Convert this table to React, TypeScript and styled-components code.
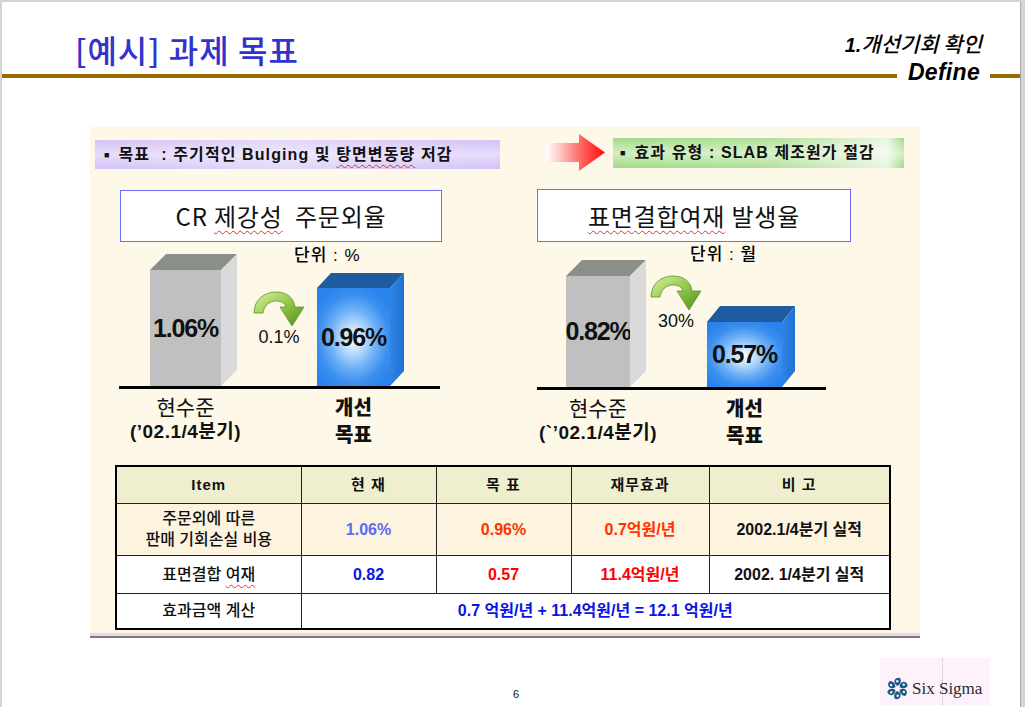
import React from "react";
import styled, { createGlobalStyle } from "styled-components";

const KR = `"Liberation Sans", "Noto Sans CJK KR", sans-serif`;
const KRONLY = `"Noto Sans CJK KR", "Noto Sans", sans-serif`;

const GlobalStyle = createGlobalStyle`
  html, body { margin: 0; padding: 0; }
  body {
    width: 1025px; height: 707px; overflow: hidden;
    background: #d4d4d4; font-family: ${KRONLY}; color: #000;
  }
  #root { width: 1025px; height: 707px; }
`;

const Frame = styled.div`
  width: 1025px;
  height: 707px;
  box-sizing: border-box;
  padding: 2px 4px 0 2px;
  background: #d4d4d4;
`;

const Slide = styled.div`
  height: 705px;
  background: #fff;
  display: flex;
  flex-direction: column;
  border-right: 1px solid #a9a9a9;
  box-sizing: border-box;
`;

/* ---------- header ---------- */
const HeaderTop = styled.header`
  height: 58px;
  display: flex;
  justify-content: space-between;
  align-items: flex-end;
  padding: 0 38px 0 73px;
  box-sizing: border-box;
`;

const Title = styled.h1`
  margin: 0 0 -5px;
  font: 500 32px/1 ${KRONLY};
  letter-spacing: 1px;
  color: #3333cc;
`;

const Section = styled.div`
  margin: 0 0 5px;
  font: italic 500 21px/20px ${KRONLY};
  color: #000;
`;

const SectionNum = styled.span`
  font: italic 700 20px/20px "Liberation Sans", sans-serif;
`;

const RuleRow = styled.div`
  height: 22px;
  display: flex;
  align-items: flex-start;
`;

const Rule = styled.div<{ $w?: number }>`
  height: 4px;
  margin-top: 14px;
  background: #9c6b00;
  ${(p) => (p.$w ? `width:${p.$w}px; flex:none;` : "flex:1;")}
`;

const Define = styled.div`
  margin-top: 2px;
  padding: 0 10px 0 11px;
  font: italic 700 23px/20px "Liberation Sans", Arial, sans-serif;
  letter-spacing: 0.3px;
  color: #000;
`;

/* ---------- panel ---------- */
const Panel = styled.section`
  margin: 45px 0 0 88px;
  width: 830px;
  height: 511px;
  box-sizing: border-box;
  background: #fef8e8;
  border-bottom: 2px solid #7b7b7b;
  box-shadow: inset 0 -3px 0 #f1d6e2;
  display: flex;
  flex-direction: column;
`;

const TopGrid = styled.div`
  display: grid;
  grid-template-columns: 426px 404px;
  height: 338px;
  align-items: start;
`;

const Column = styled.div<{ $pt: number }>`
  display: flex;
  flex-direction: column;
  align-items: flex-start;
  padding-top: ${(p) => p.$pt}px;
`;

const BannerRow = styled.div`
  display: flex;
  align-items: center;
  height: 37px;
`;

type Tone = "violet" | "green";

const Banner = styled.div<{ $tone: Tone; $w: number; $h: number; $ml: number; $pl: number }>`
  width: ${(p) => p.$w}px;
  height: ${(p) => p.$h}px;
  margin-left: ${(p) => p.$ml}px;
  padding-left: ${(p) => p.$pl}px;
  box-sizing: border-box;
  display: flex;
  align-items: center;
  white-space: pre;
  font: 700 16px/1 ${KR};
  letter-spacing: 1.1px;
  color: #111;
  background: ${(p) =>
    p.$tone === "violet"
      ? "linear-gradient(90deg, rgba(255,255,255,0) 0%, rgba(255,255,255,0.35) 45%, rgba(255,255,255,0) 100%), linear-gradient(180deg, #d2c2f5 0%, #e6dcfb 50%, #d2c2f5 100%)"
      : "linear-gradient(90deg, rgba(255,255,255,0) 0%, rgba(255,255,255,0.15) 55%, rgba(255,255,255,0.75) 94%, rgba(255,255,255,0) 100%), linear-gradient(180deg, #a2da86 0%, #d2efc3 50%, #a2da86 100%)"};
`;

const BannerText = styled.span`
  display: inline-block;
`;

const Bullet = styled.span`
  font-size: 9px;
  margin-right: 8px;
  position: relative;
  top: -2px;
`;

const TitleBox = styled.div<{ $w: number; $h: number; $ml: number; $mt: number }>`
  width: ${(p) => p.$w}px;
  height: ${(p) => p.$h}px;
  margin: ${(p) => p.$mt}px 0 0 ${(p) => p.$ml}px;
  box-sizing: border-box;
  border: 1px solid #6f6ff2;
  background: #fff;
  display: flex;
  align-items: center;
  justify-content: center;
  font: 400 24px/1 ${KRONLY};
  letter-spacing: 0.8px;
  color: #111;
  white-space: pre;
`;

const TitleText = styled.span`
  display: inline-block;
`;

const Wavy = styled.span`
  text-decoration: underline wavy #e03030;
  text-decoration-thickness: 1px;
  text-underline-offset: 4px;
`;

/* ---------- chart ---------- */
const Unit = styled.div<{ $pl: number; $mt: number }>`
  padding-left: ${(p) => p.$pl}px;
  margin-top: ${(p) => p.$mt}px;
  font: 500 17px/18px ${KR};
  letter-spacing: 1px;
  white-space: nowrap;
`;

const Plot = styled.div<{ $w: number; $ml: number; $mt: number }>`
  display: flex;
  align-items: flex-end;
  width: ${(p) => p.$w}px;
  margin: ${(p) => p.$mt}px 0 0 ${(p) => p.$ml}px;
  border-bottom: 3px solid #000;
`;

type CubeTone = "gray" | "blue";

const faceColors: Record<CubeTone, { front: string; top: string; side: string }> = {
  gray: { front: "#c0c0c0", top: "#8a9089", side: "#dadada" },
  blue: {
    front:
      "radial-gradient(ellipse 62% 58% at 50% 52%, #ffffff 0%, #c4e0fc 22%, #6db0f6 52%, #3a8ff0 78%, #2a83ec 100%)",
    top: "#1e5b9f",
    side: "linear-gradient(90deg, #2f86e6, #1f6fd2)",
  },
};

const CubeBox = styled.div<{ $w: number; $h: number; $dx: number; $dy: number; $ml: number }>`
  position: relative;
  flex: none;
  box-sizing: border-box;
  width: ${(p) => p.$w + p.$dx}px;
  height: ${(p) => p.$h + p.$dy}px;
  padding-top: ${(p) => p.$dy}px;
  margin-left: ${(p) => p.$ml}px;
`;

const Front = styled.div<{ $tone: CubeTone; $w: number; $h: number }>`
  width: ${(p) => p.$w}px;
  height: ${(p) => p.$h}px;
  background: ${(p) => faceColors[p.$tone].front};
  display: flex;
  align-items: center;
  justify-content: center;
  font: 700 25px/1 "Liberation Sans", Arial, sans-serif;
  letter-spacing: -1.2px;
  color: #111;
  white-space: nowrap;
`;

const TopFace = styled.div<{ $tone: CubeTone; $w: number; $dx: number; $dy: number }>`
  position: absolute;
  left: 0;
  top: 0;
  width: ${(p) => p.$w + p.$dx}px;
  height: ${(p) => p.$dy}px;
  background: ${(p) => faceColors[p.$tone].top};
  clip-path: polygon(${(p) => p.$dx}px 0, 100% 0, ${(p) => p.$w}px 100%, 0 100%);
`;

const SideFace = styled.div<{ $tone: CubeTone; $h: number; $dx: number; $dy: number }>`
  position: absolute;
  right: 0;
  top: 0;
  width: ${(p) => p.$dx}px;
  height: ${(p) => p.$h + p.$dy}px;
  background: ${(p) => faceColors[p.$tone].side};
  clip-path: polygon(0 ${(p) => p.$dy}px, 100% 0, 100% ${(p) => p.$h}px, 0 100%);
`;

const ArrowBlock = styled.div<{ $ml: number; $mb: number }>`
  flex: none;
  width: 52px;
  margin: 0 0 ${(p) => p.$mb}px ${(p) => p.$ml}px;
  display: flex;
  flex-direction: column;
  align-items: center;
`;

const ArrowPct = styled.div`
  margin-top: 2px;
  font: 400 18px/17px "Liberation Sans", Arial, sans-serif;
  color: #111;
`;

const LabelRow = styled.div<{ $ml: number }>`
  display: flex;
  margin: 4px 0 0 ${(p) => p.$ml}px;
`;

const Label = styled.div<{ $w: number; $ml: number }>`
  flex: none;
  width: ${(p) => p.$w}px;
  margin-left: ${(p) => p.$ml}px;
  display: flex;
  flex-direction: column;
  align-items: center;
  white-space: nowrap;
`;

const LabelLine = styled.span<{ $kind: "plain" | "period" | "strong" }>`
  color: #111;
  text-align: center;
  font: ${(p) =>
    p.$kind === "plain"
      ? `400 21px/26px ${KRONLY}`
      : p.$kind === "period"
      ? `700 19px/26px ${KR}`
      : `900 20px/27px ${KRONLY}`};
  letter-spacing: ${(p) => (p.$kind === "period" ? "0.5px" : "0")};
`;

const CurveArrow = () => (
  <svg width="52" height="36" viewBox="0 0 52 36">
    <defs>
      <linearGradient id="ga" x1="0" y1="0" x2="1" y2="1">
        <stop offset="0" stopColor="#d8f0a0" />
        <stop offset="0.5" stopColor="#92c84c" />
        <stop offset="1" stopColor="#4f8d1c" />
      </linearGradient>
    </defs>
    <path
      d="M1 22 C1 9 11 1 23 1 C34 1 41 7 42 16 L51 16 L39 35 L27 16 L33 16 C32 12 28 10 23 10 C16 10 11 15 10 22 Z"
      fill="url(#ga)"
      stroke="#5f922a"
      strokeWidth="0.8"
    />
  </svg>
);

const RedArrowSvg = styled.svg<{ $ml: number }>`
  flex: none;
  margin-left: ${(p) => p.$ml}px;
`;

const RedArrow = ({ ml }: { ml: number }) => (
  <RedArrowSvg $ml={ml} width="59" height="37" viewBox="0 0 59 37">
    <defs>
      <linearGradient id="ra" x1="0" y1="0" x2="1" y2="0">
        <stop offset="0" stopColor="#ffffff" stopOpacity="0.9" />
        <stop offset="0.55" stopColor="#ff7070" />
        <stop offset="1" stopColor="#ff0a0a" />
      </linearGradient>
    </defs>
    <path d="M0 9 L33 9 L33 0 L59 18.5 L33 37 L33 28 L0 28 Z" fill="url(#ra)" />
  </RedArrowSvg>
);

type CubeSpec = { w: number; h: number; dx: number; dy: number; ml: number; value: string };

const Cube = ({ spec, tone }: { spec: CubeSpec; tone: CubeTone }) => (
  <CubeBox $w={spec.w} $h={spec.h} $dx={spec.dx} $dy={spec.dy} $ml={spec.ml}>
    <TopFace $tone={tone} $w={spec.w} $dx={spec.dx} $dy={spec.dy} />
    <SideFace $tone={tone} $h={spec.h} $dx={spec.dx} $dy={spec.dy} />
    <Front $tone={tone} $w={spec.w} $h={spec.h}>
      {spec.value}
    </Front>
  </CubeBox>
);

type ChartSpec = {
  unit: string;
  unitPl: number;
  unitMt: number;
  plotW: number;
  plotMl: number;
  plotMt: number;
  gray: CubeSpec;
  blue: CubeSpec;
  arrow: { ml: number; mb: number; pct: string };
  labels: [{ ml: number; w: number }, { ml: number; w: number }];
  period: string;
};

const Chart = ({ spec }: { spec: ChartSpec }) => (
  <>
    <Unit $pl={spec.plotMl + spec.unitPl} $mt={spec.unitMt}>
      {spec.unit}
    </Unit>
    <Plot $w={spec.plotW} $ml={spec.plotMl} $mt={spec.plotMt}>
      <Cube spec={spec.gray} tone="gray" />
      <ArrowBlock $ml={spec.arrow.ml} $mb={spec.arrow.mb}>
        <CurveArrow />
        <ArrowPct>{spec.arrow.pct}</ArrowPct>
      </ArrowBlock>
      <Cube spec={spec.blue} tone="blue" />
    </Plot>
    <LabelRow $ml={spec.plotMl}>
      <Label $w={spec.labels[0].w} $ml={spec.labels[0].ml}>
        <LabelLine $kind="plain">현수준</LabelLine>
        <LabelLine $kind="period">{spec.period}</LabelLine>
      </Label>
      <Label $w={spec.labels[1].w} $ml={spec.labels[1].ml}>
        <LabelLine $kind="strong">
          개선
          <br />
          목표
        </LabelLine>
      </Label>
    </LabelRow>
  </>
);

const leftChart: ChartSpec = {
  unit: "단위 : %",
  unitPl: 175,
  unitMt: 5,
  plotW: 321,
  plotMl: 29,
  plotMt: -11,
  gray: { w: 71, h: 116, dx: 16, dy: 16, ml: 31, value: "1.06%" },
  blue: { w: 73, h: 98, dx: 14, dy: 15, ml: 12, value: "0.96%" },
  arrow: { ml: 16, mb: 40, pct: "0.1%" },
  labels: [
    { ml: 31, w: 71 },
    { ml: 96, w: 73 },
  ],
  period: "(’02.1/4분기)",
};

const rightChart: ChartSpec = {
  unit: "단위 : 월",
  unitPl: 153,
  unitMt: 4,
  plotW: 289,
  plotMl: 21,
  plotMt: -4,
  gray: { w: 64, h: 111, dx: 16, dy: 16, ml: 29, value: "0.82%" },
  blue: { w: 75, h: 65, dx: 13, dy: 16, ml: 5, value: "0.57%" },
  arrow: { ml: 4, mb: 57, pct: "30%" },
  labels: [
    { ml: 29, w: 64 },
    { ml: 77, w: 75 },
  ],
  period: "(`’02.1/4분기)",
};

/* ---------- table ---------- */
const Table = styled.table`
  margin-left: 25px;
  width: 774px;
  border-collapse: collapse;
  table-layout: fixed;
  border: 2px solid #000;
  font-family: ${KR};
`;

const Col = styled.col<{ $w: number }>`
  width: ${(p) => p.$w}px;
`;

const Row = styled.tr<{ $h: number; $bg: string }>`
  height: ${(p) => p.$h}px;
  background: ${(p) => p.$bg};
`;

const Th = styled.th`
  padding: 0;
  border: 1px solid #222;
  background: #efefcf;
  font: 700 15px/1 ${KR};
  letter-spacing: 1px;
  color: #111;
`;

const Td = styled.td<{ $color?: string; $weight?: number }>`
  padding: 0;
  border: 1px solid #222;
  text-align: center;
  font-size: 16px;
  line-height: 21px;
  font-weight: ${(p) => p.$weight ?? 700};
  color: ${(p) => p.$color ?? "#111"};
  white-space: nowrap;
`;

/* ---------- footer ---------- */
const Footer = styled.footer`
  flex: 1;
  display: grid;
  grid-template-columns: 1fr auto 1fr;
  align-items: end;
`;

const PageNum = styled.div`
  grid-column: 2;
  margin: 0 0 6px 10px;
  font: 400 11px/14px "Liberation Sans", Arial, sans-serif;
  color: #111;
`;

const Logo = styled.div`
  grid-column: 3;
  justify-self: end;
  position: relative;
  width: 110px;
  height: 47px;
  margin: 0 30px 2px 0;
  box-sizing: border-box;
  padding: 0 0 0 6px;
  background: #fdf2fb;
  display: flex;
  align-items: center;
  gap: 3px;
  &::after {
    content: "";
    position: absolute;
    left: 62px;
    top: 0;
    bottom: 0;
    border-left: 1px dotted #c8c0c8;
  }
`;

const LogoText = styled.span`
  margin-top: 14px;
  font: 400 17px/20px "Liberation Serif", "Times New Roman", serif;
  color: #2b2b2b;
  position: relative;
  z-index: 1;
`;

const LogoMarkSvg = styled.svg`
  flex: none;
  margin-top: 14px;
`;

const LogoMark = () => (
  <LogoMarkSvg width="23" height="23" viewBox="-12 -12 24 24">
    {[0, 60, 120, 180, 240, 300].map((a) => (
      <g key={a} transform={`rotate(${a})`}>
        <path
          d="M0 -2.6 C2.6 -4 4.6 -7 2.8 -10.6 C0.8 -11.8 -2.6 -10.8 -3.2 -8 C-3.6 -5.6 -2.2 -3.6 0 -2.6 Z"
          fill="#1c5a86"
        />
        <circle cx="-0.2" cy="-7.6" r="1.3" fill="#fdf2fb" />
      </g>
    ))}
    <circle r="2.2" fill="#fdf2fb" />
  </LogoMarkSvg>
);

export default function App() {
  return (
    <>
      <GlobalStyle />
      <Frame>
        <Slide>
          <HeaderTop>
            <Title>[예시] 과제 목표</Title>
            <Section>
              <SectionNum>1.</SectionNum>개선기회 확인
            </Section>
          </HeaderTop>
          <RuleRow>
            <Rule />
            <Define>Define</Define>
            <Rule $w={30} />
          </RuleRow>

          <Panel>
            <TopGrid>
              <Column $pt={13}>
                <Banner $tone="violet" $w={405} $h={29} $ml={5} $pl={9}>
                  <BannerText>
                    <Bullet>■</Bullet>
                    {"목표  : 주기적인 Bulging 및 "}
                    <Wavy>탕면변동량</Wavy>
                    {" 저감"}
                  </BannerText>
                </Banner>
                <TitleBox $w={322} $h={52} $ml={30} $mt={21}>
                  <TitleText>
                    CR <Wavy>제강성</Wavy>{"  "}주문외율
                  </TitleText>
                </TitleBox>
                <Chart spec={leftChart} />
              </Column>

              <Column $pt={7}>
                <BannerRow>
                  <RedArrow ml={30} />
                  <Banner $tone="green" $w={291} $h={30} $ml={8} $pl={7}>
                    <BannerText>
                      <Bullet>■</Bullet>효과 유형 : SLAB 제조원가 절감
                    </BannerText>
                  </Banner>
                </BannerRow>
                <TitleBox $w={314} $h={53} $ml={21} $mt={18}>
                  <TitleText>
                    <Wavy>표면결합여재</Wavy> 발생율
                  </TitleText>
                </TitleBox>
                <Chart spec={rightChart} />
              </Column>
            </TopGrid>

            <Table>
              <colgroup>
                <Col $w={185} />
                <Col $w={135} />
                <Col $w={135} />
                <Col $w={138} />
                <Col $w={181} />
              </colgroup>
              <thead>
                <Row $h={37} $bg="#efefcf">
                  <Th>Item</Th>
                  <Th>현 재</Th>
                  <Th>목 표</Th>
                  <Th>재무효과</Th>
                  <Th>비 고</Th>
                </Row>
              </thead>
              <tbody>
                <Row $h={52} $bg="#fdf4e0">
                  <Td $weight={500}>
                    주문외에 따른
                    <br />
                    판매 기회손실 비용
                  </Td>
                  <Td $color="#5b68f2">1.06%</Td>
                  <Td $color="#ff3300">0.96%</Td>
                  <Td $color="#ff3300">0.7억원/년</Td>
                  <Td>2002.1/4분기 실적</Td>
                </Row>
                <Row $h={38} $bg="#ffffff">
                  <Td $weight={500}>
                    표면결합 <Wavy>여재</Wavy>
                  </Td>
                  <Td $color="#0a14e6">0.82</Td>
                  <Td $color="#ff0000">0.57</Td>
                  <Td $color="#ff0000">11.4억원/년</Td>
                  <Td>2002. 1/4분기 실적</Td>
                </Row>
                <Row $h={36} $bg="#ffffff">
                  <Td $weight={500}>효과금액 계산</Td>
                  <Td colSpan={4} $color="#0a14e6">
                    0.7 억원/년 + 11.4억원/년 = 12.1 억원/년
                  </Td>
                </Row>
              </tbody>
            </Table>
          </Panel>

          <Footer>
            <PageNum>6</PageNum>
            <Logo>
              <LogoMark />
              <LogoText>Six Sigma</LogoText>
            </Logo>
          </Footer>
        </Slide>
      </Frame>
    </>
  );
}
